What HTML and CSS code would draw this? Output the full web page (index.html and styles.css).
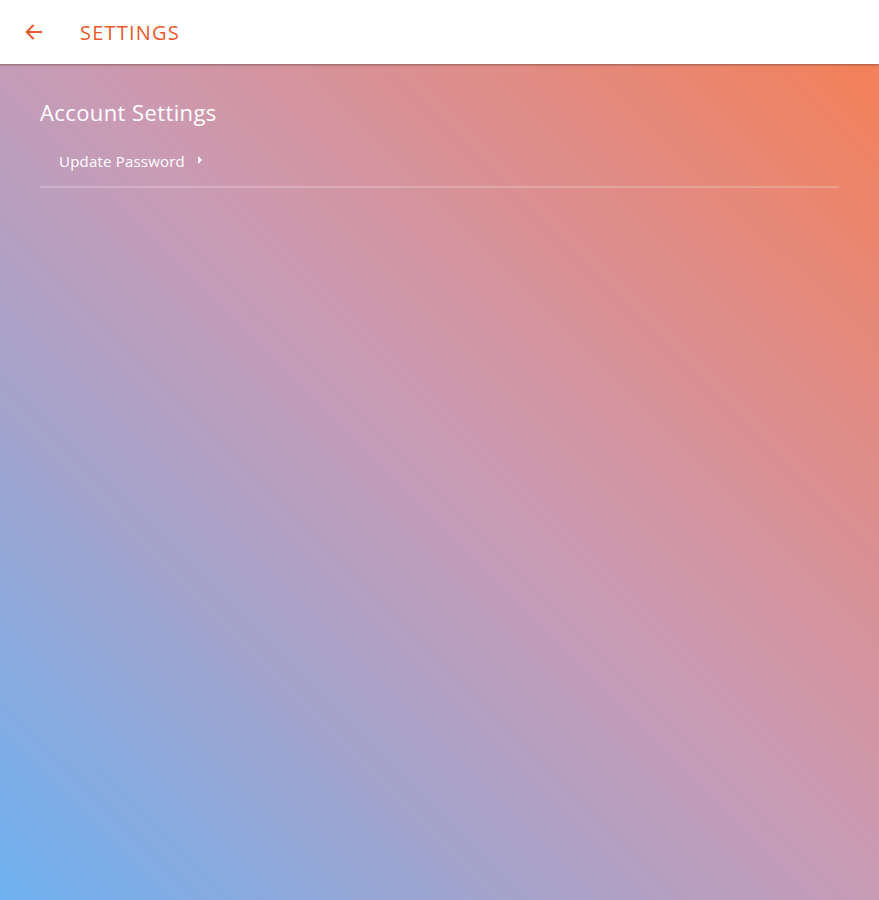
FILE: index.html
```html
<!DOCTYPE html>
<html lang="en">
<head>
<meta charset="UTF-8" />
<meta name="viewport" content="width=device-width, initial-scale=1.0" />
<title>Settings</title>
<link rel="stylesheet" href="styles.css">
</head>
<body>
  <header id="topbar">
    <button id="back" aria-label="Back">
      <svg width="22" height="22" viewBox="0 0 24 24"><path d="M20 12H5M11 5l-7 7 7 7" fill="none" stroke="#e95a2b" stroke-width="2.2" stroke-linecap="round" stroke-linejoin="round"/></svg>
    </button>
    <h1>SETTINGS</h1>
  </header>
  <main id="content">
    <h2>Account Settings</h2>
    <ul class="menu">
      <li class="menu-item">Update Password <span class="caret"></span></li>
    </ul>
  </main>
</body>
</html>
```
FILE: styles.css
```css
html,body{height:100%;}
body{margin:0;font-family:"Open Sans","Noto Sans",sans-serif;display:flex;flex-direction:column;background:linear-gradient(45deg,#6fb2f2 0%,#a3a3cc 28%,#c99bb5 50%,#e08c86 75%,#f77e50 100%);}
#topbar{height:64px;background:#fff;display:flex;align-items:center;box-shadow:0 1px 2px rgba(90,60,50,.55);position:relative;z-index:1;flex-shrink:0;}
#back{border:none;background:none;padding:0;margin-left:22px;width:24px;height:24px;display:flex;align-items:center;justify-content:center;cursor:pointer;}
#topbar h1{margin:0 0 0 34px;font-size:20px;font-weight:400;color:#e95a2b;letter-spacing:1.2px;}
#content{flex:1;padding:0 40px;}
#content h2{margin:33px 0 0;font-size:22px;font-weight:400;color:#fff;letter-spacing:.4px;}
.menu{list-style:none;margin:20px 0 0;padding:0;}
.menu-item{color:#fff;font-size:15px;letter-spacing:.2px;padding:4px 0 15px 19px;border-bottom:2px solid rgba(255,255,255,.22);}
.caret{display:inline-block;width:0;height:0;border-left:4px solid #fff;border-top:4px solid transparent;border-bottom:4px solid transparent;margin-left:9px;vertical-align:3px;}
```
